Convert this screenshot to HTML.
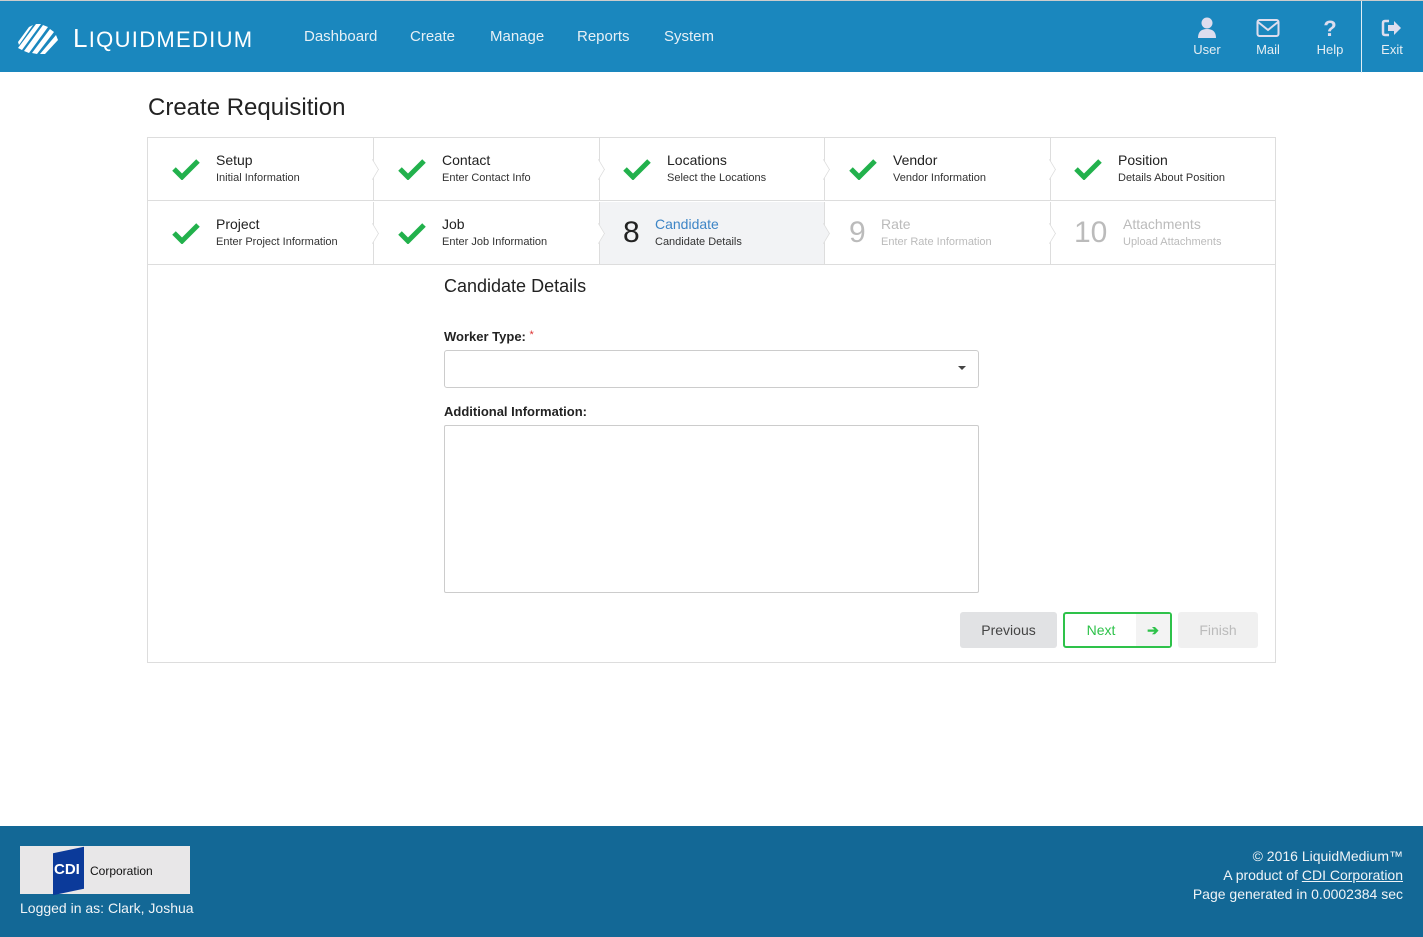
<!DOCTYPE html>
<html><head><style>
*{box-sizing:border-box;margin:0;padding:0}
body{width:1423px;height:937px;position:relative;font-family:"Liberation Sans",sans-serif;background:#fff;color:#222;overflow:hidden}
.hdr{position:absolute;top:0;left:0;width:1423px;height:72px;background:#1a87be;border-top:1px solid #ccc}
.logo{position:absolute;left:73px;top:22px;color:#fff;font-size:26px;letter-spacing:1.3px}
.nav a{position:absolute;top:27px;color:#e6f0f6;font-size:15px;text-decoration:none}
.ic{position:absolute;top:16px;width:60px;text-align:center;color:#e6eef3;font-size:13px}
.ic svg{display:block;margin:0 auto 3px}
h1{position:absolute;left:148px;top:94px;font-size:24px;font-weight:normal;color:#222}
.panel{position:absolute;left:147px;top:137px;width:1129px;height:526px;border:1px solid #ddd}
.cell{position:absolute;width:226px;height:63px;border-bottom:1px solid #ddd}
.cell .t{position:absolute;left:68px;top:14px;font-size:14px;color:#222}
.cell .s{position:absolute;left:68px;top:34px;font-size:11px;color:#333}
.cell .n{position:absolute;left:24px;top:14px;font-size:30px;color:#222}
.cell svg{position:absolute;left:24px;top:20px}
.cell.gr .t,.cell.gr .s,.cell.gr .n{color:#bbb}
.chev{position:absolute;width:1px;height:63px;background:#ddd}
.chev::after{content:"";position:absolute;top:24px;width:14px;height:14px;border-top:1px solid #ddd;border-right:1px solid #ddd;transform:scaleX(.6) rotate(45deg);background:#fff;left:-8px}
.chev.g::after{background:#f2f3f5}
.lab{position:absolute;left:444px;font-size:13px;font-weight:bold;color:#222}
.btn{position:absolute;top:612px;height:36px;border-radius:3px;font-size:14px;text-align:center;line-height:36px}
.ft{position:absolute;left:0;top:826px;width:1423px;height:111px;background:#136896;color:#f0f4f7;font-size:14px}
</style></head><body>
<div class="hdr">
<svg style="position:absolute;left:16px;top:19px" width="46" height="34" viewBox="0 0 46 34"><g fill="#fff"><path d="M2 28 L20 4 L25 4 L6 30Z"/><path d="M8 31 L27 5 L32 7 L13 33Z"/><path d="M16 33 L34 9 L38 12 L21 34Z"/><path d="M24 34 L40 15 L42 20 L29 34Z"/><path d="M2 22 L13 7 L17 5 L3 25Z"/></g></svg>
<div class="logo">L<span style="font-size:22px">IQUIDMEDIUM</span></div>
<div class="nav"><a style="left:304px">Dashboard</a><a style="left:410px">Create</a><a style="left:490px">Manage</a><a style="left:577px">Reports</a><a style="left:664px">System</a></div>
<div class="ic" style="left:1177px"><svg width="20" height="22" viewBox="0 0 20 22"><circle cx="10" cy="6" r="5.5" fill="#dde"/><path d="M1 21 Q1 12 10 12 Q19 12 19 21Z" fill="#dde"/></svg>User</div>
<div class="ic" style="left:1238px"><svg width="24" height="22" viewBox="0 0 24 22"><rect x="1.5" y="3" width="21" height="16" rx="2" fill="none" stroke="#dde" stroke-width="2"/><path d="M2 5 L12 13 L22 5" fill="none" stroke="#dde" stroke-width="2"/></svg>Mail</div>
<div class="ic" style="left:1300px"><svg width="20" height="22" viewBox="0 0 20 22"><text x="10" y="19" text-anchor="middle" font-size="22" font-weight="bold" fill="#dde" font-family="Liberation Sans">?</text></svg>Help</div>
<div style="position:absolute;left:1361px;top:0;width:1px;height:72px;background:#e0eef5"></div>
<div class="ic" style="left:1362px"><svg width="22" height="22" viewBox="0 0 22 22"><path d="M8 4 H4 Q2 4 2 6 V16 Q2 18 4 18 H8" fill="none" stroke="#dde" stroke-width="2.5"/><path d="M7 8 H13 V4 L20 11 L13 18 V14 H7Z" fill="#dde"/></svg>Exit</div>
</div>
<h1>Create Requisition</h1>
<div class="panel">
<div class="cell" style="left:0;top:0"><svg width="28" height="22" viewBox="0 0 28 22"><path d="M2 11 L10 19 L26 3" fill="none" stroke="#22b14c" stroke-width="5"/></svg><div class="t">Setup</div><div class="s">Initial Information</div></div>
<div class="cell" style="left:226px;top:0"><svg width="28" height="22" viewBox="0 0 28 22"><path d="M2 11 L10 19 L26 3" fill="none" stroke="#22b14c" stroke-width="5"/></svg><div class="t">Contact</div><div class="s">Enter Contact Info</div></div>
<div class="cell" style="left:451px;top:0"><svg width="28" height="22" viewBox="0 0 28 22"><path d="M2 11 L10 19 L26 3" fill="none" stroke="#22b14c" stroke-width="5"/></svg><div class="t">Locations</div><div class="s">Select the Locations</div></div>
<div class="cell" style="left:677px;top:0"><svg width="28" height="22" viewBox="0 0 28 22"><path d="M2 11 L10 19 L26 3" fill="none" stroke="#22b14c" stroke-width="5"/></svg><div class="t">Vendor</div><div class="s">Vendor Information</div></div>
<div class="cell" style="left:902px;top:0"><svg width="28" height="22" viewBox="0 0 28 22"><path d="M2 11 L10 19 L26 3" fill="none" stroke="#22b14c" stroke-width="5"/></svg><div class="t">Position</div><div class="s">Details About Position</div></div>
<div class="cell" style="left:0;top:64px"><svg width="28" height="22" viewBox="0 0 28 22"><path d="M2 11 L10 19 L26 3" fill="none" stroke="#22b14c" stroke-width="5"/></svg><div class="t">Project</div><div class="s">Enter Project Information</div></div>
<div class="cell" style="left:226px;top:64px"><svg width="28" height="22" viewBox="0 0 28 22"><path d="M2 11 L10 19 L26 3" fill="none" stroke="#22b14c" stroke-width="5"/></svg><div class="t">Job</div><div class="s">Enter Job Information</div></div>
<div class="cell" style="left:451px;top:64px;background:#f2f3f5"><div class="n">8</div><div class="t" style="left:56px;color:#3d85c6">Candidate</div><div class="s" style="left:56px">Candidate Details</div></div>
<div class="cell gr" style="left:677px;top:64px"><div class="n">9</div><div class="t" style="left:56px">Rate</div><div class="s" style="left:56px">Enter Rate Information</div></div>
<div class="cell gr" style="left:902px;top:64px"><div class="n">10</div><div class="t" style="left:73px">Attachments</div><div class="s" style="left:73px">Upload Attachments</div></div>
<div class="chev" style="left:225px;top:0"></div><div class="chev" style="left:451px;top:0"></div><div class="chev" style="left:676px;top:0"></div><div class="chev" style="left:902px;top:0"></div>
<div class="chev" style="left:225px;top:64px"></div><div class="chev" style="left:451px;top:64px"></div><div class="chev g" style="left:676px;top:64px"></div><div class="chev" style="left:902px;top:64px"></div>
</div>
<div style="position:absolute;left:444px;top:276px;font-size:18px;color:#222">Candidate Details</div>
<div class="lab" style="top:329px">Worker Type: <span style="color:#d33;font-weight:normal;vertical-align:top;font-size:11px">*</span></div>
<div style="position:absolute;left:444px;top:350px;width:535px;height:38px;border:1px solid #ccc;border-radius:3px"><div style="position:absolute;right:12px;top:15px;border:4px solid transparent;border-top-color:#444"></div></div>
<div class="lab" style="top:404px">Additional Information:</div>
<div style="position:absolute;left:444px;top:425px;width:535px;height:168px;border:1px solid #ccc;border-radius:2px"></div>
<div class="btn" style="left:960px;width:97px;background:#e1e2e4;color:#444">Previous</div>
<div class="btn" style="left:1063px;width:109px;border:2px solid #2ec24a;line-height:32px;color:#2ec24a;background:#fff"><span style="position:absolute;left:0;width:72px">Next</span><span style="position:absolute;right:0;width:34px;height:32px;background:#f3f3f3;font-weight:bold">➔</span></div>
<div class="btn" style="left:1178px;width:80px;background:#f0f0f0;color:#bbb">Finish</div>
<div class="ft">
<div style="position:absolute;left:20px;top:20px;width:170px;height:48px;background:#e8e7e8">
<div style="position:absolute;left:33px;top:4px;width:31px;height:42px;background:#0b3a9a;transform:skewY(-12deg)"></div>
<div style="position:absolute;left:34px;top:15px;color:#fff;font-weight:bold;font-size:15px">CDI</div>
<div style="position:absolute;left:70px;top:18px;color:#111;font-size:12px">Corporation</div></div>
<div style="position:absolute;left:20px;top:74px">Logged in as: Clark, Joshua</div>
<div style="position:absolute;right:20px;top:21px;text-align:right;line-height:19px">© 2016 LiquidMedium™<br>A product of <u>CDI Corporation</u><br>Page generated in 0.0002384 sec</div>
</div>
</body></html>
